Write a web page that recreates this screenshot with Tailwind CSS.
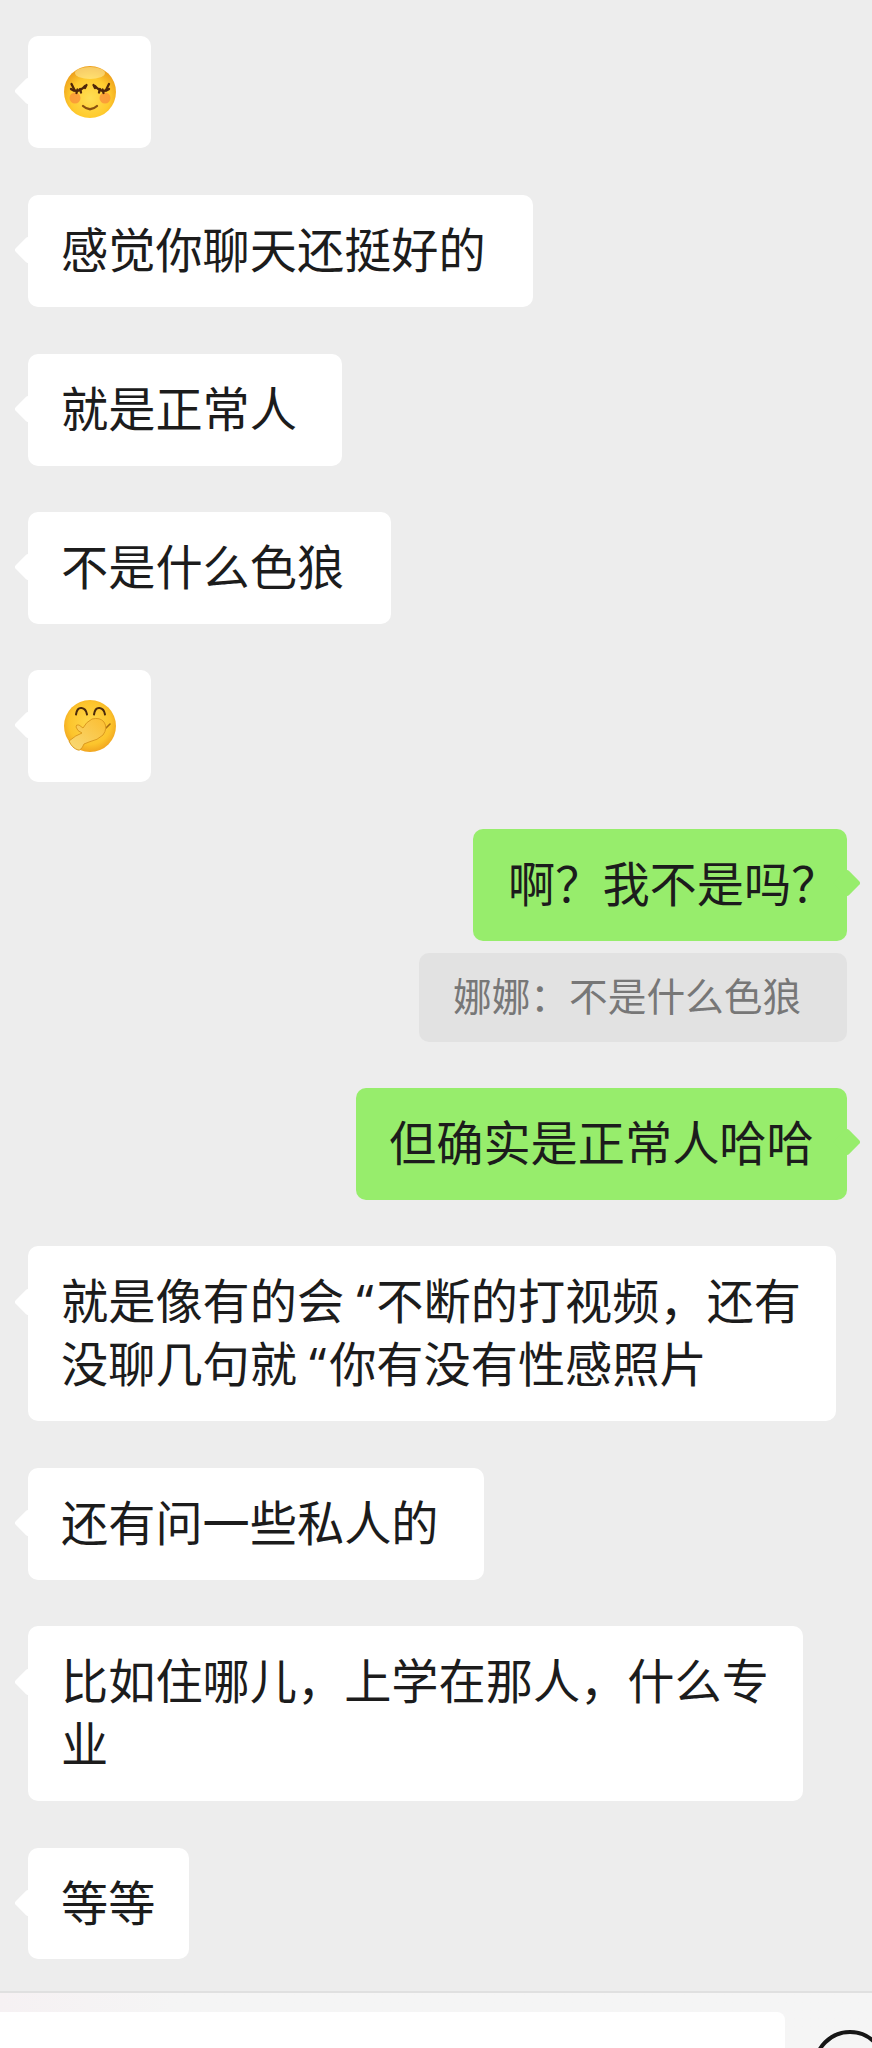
<!DOCTYPE html>
<html lang="zh">
<head>
<meta charset="utf-8">
<script src="https://cdn.jsdelivr.net/npm/@tailwindcss/browser@4"></script>
<title>Chat</title>
</head>
<body class="bg-[#ededed]">
<div class="h-[2048px] w-[872px] overflow-hidden flex flex-col text-[47.2px] leading-[63px] text-[#1c1c1c] font-['Noto_Sans','Noto_Sans_CJK_SC',sans-serif]">

  <!-- Messages -->
  <div class="flex flex-col items-start shrink-0 pt-[36px] pl-[28px] pr-[25px] h-[1991px]">
    <div class="relative shrink-0 bg-white rounded-[10px] w-[123px] h-[112px] flex items-center justify-center">
      <span class="absolute left-[-10px] top-[45px] w-[20px] h-[20px] rotate-45 rounded-[3px] bg-white"></span>
      <svg class="relative" width="56" height="56" viewBox="0 0 56 56">
        <defs>
          <radialGradient id="face1" cx="50%" cy="62%" r="58%">
            <stop offset="0" stop-color="#ffdf55"/>
            <stop offset="0.65" stop-color="#ffcb2e"/>
            <stop offset="1" stop-color="#eea11c"/>
          </radialGradient>
        </defs>
        <circle cx="28" cy="28" r="26" fill="url(#face1)"/>
        <ellipse cx="28" cy="9" rx="15" ry="6" fill="#fff1a6" opacity=".55"/>
        <circle cx="13" cy="34" r="5.500" fill="#f98a3a" opacity=".7"/>
        <circle cx="43" cy="34" r="5.500" fill="#f98a3a" opacity=".7"/>
        <g fill="none" stroke="#4f260a" stroke-width="2.300" stroke-linecap="round">
          <path d="M9 25q7 5 14-3"/><path d="M9.500 20l3 6M14.500 29l1-3.500M19 28.500l-1-3.500M23 24l1.500-3"/>
          <path d="M33 22q7 8 14 3"/><path d="M47 20l-3 6M41.500 29l-1-3.500M37 28.500l1-3.500M33 24l-1.500-3"/>
          <path d="M21 42q7 6.500 14 0" stroke="#8a5210"/>
        </g>
      </svg>
    </div>

    <div class="relative shrink-0 bg-white rounded-[10px] mt-[47px] w-[505px] h-[112px] pl-[33px] pt-[24px]">
      <span class="absolute left-[-10px] top-[45px] w-[20px] h-[20px] rotate-45 rounded-[3px] bg-white"></span>
      <p class="relative">感觉你聊天还挺好的</p>
    </div>

    <div class="relative shrink-0 bg-white rounded-[10px] mt-[47px] w-[314px] h-[112px] pl-[33px] pt-[24px]">
      <span class="absolute left-[-10px] top-[45px] w-[20px] h-[20px] rotate-45 rounded-[3px] bg-white"></span>
      <p class="relative">就是正常人</p>
    </div>

    <div class="relative shrink-0 bg-white rounded-[10px] mt-[46px] w-[363px] h-[112px] pl-[33px] pt-[24px]">
      <span class="absolute left-[-10px] top-[45px] w-[20px] h-[20px] rotate-45 rounded-[3px] bg-white"></span>
      <p class="relative">不是什么色狼</p>
    </div>

    <div class="relative shrink-0 bg-white rounded-[10px] mt-[46px] w-[123px] h-[112px] flex items-center justify-center">
      <span class="absolute left-[-10px] top-[45px] w-[20px] h-[20px] rotate-45 rounded-[3px] bg-white"></span>
      <svg class="relative" width="56" height="56" viewBox="0 0 56 56">
        <defs>
          <radialGradient id="face2" cx="50%" cy="45%" r="58%">
            <stop offset="0" stop-color="#ffd84a"/>
            <stop offset="0.7" stop-color="#fcc42c"/>
            <stop offset="1" stop-color="#ef9f1e"/>
          </radialGradient>
          <linearGradient id="hand" x1="1" y1="0" x2="0" y2="1">
            <stop offset="0" stop-color="#fbbd30"/>
            <stop offset="1" stop-color="#f9da78"/>
          </linearGradient>
        </defs>
        <circle cx="28" cy="28" r="26" fill="url(#face2)"/>
        <g fill="none" stroke="#4a2a0c" stroke-width="2" stroke-linecap="round">
          <path d="M14 16.500q1-7 5.500-6.500t5.500 6.500"/>
          <path d="M32 16.500q1-7 5.500-6.500t5.500 6.500"/>
          <path d="M44 30l4-4" stroke="#a56a12" stroke-width="1.600"/>
        </g>
        <path d="M7 43Q14 37 20 35Q15 33 14 29Q14 26 17 27L21 30Q24 24 30 21Q38 19 42 24Q46 30 41 37Q36 42 27 44L22 46Q19 53 16 52Q10 50 7 43Z" fill="url(#hand)" stroke="#dc9a1e" stroke-width="1" stroke-linejoin="round"/>
      </svg>
    </div>

    <div class="relative shrink-0 self-end bg-[#97ed6c] rounded-[10px] mt-[47px] w-[374px] h-[112px] pl-[35px] pt-[24px]">
      <span class="absolute right-[-10px] top-[44px] w-[20px] h-[20px] rotate-45 rounded-[3px] bg-[#97ed6c]"></span>
      <p class="relative">啊？我不是吗？</p>
    </div>
    <div class="shrink-0 self-end bg-[#e2e2e2] rounded-[10px] mt-[12px] w-[428px] h-[89px] pl-[34px] flex items-center text-[38.7px] text-[#777777]">
      <p class="-mt-[2px]">娜娜：不是什么色狼</p>
    </div>

    <div class="relative shrink-0 self-end bg-[#97ed6c] rounded-[10px] mt-[46px] w-[491px] h-[112px] pl-[33px] pt-[24px]">
      <span class="absolute right-[-10px] top-[44px] w-[20px] h-[20px] rotate-45 rounded-[3px] bg-[#97ed6c]"></span>
      <p class="relative">但确实是正常人哈哈</p>
    </div>

    <div class="relative shrink-0 bg-white rounded-[10px] mt-[46px] w-[808px] h-[175px] pl-[33px] pt-[24px]">
      <span class="absolute left-[-10px] top-[46px] w-[20px] h-[20px] rotate-45 rounded-[3px] bg-white"></span>
      <p class="relative whitespace-nowrap">就是像有的会 “<span class="ml-[3px]">不断的打视频，还有</span><br>没聊几句就 “<span class="ml-[3px]">你有没有性感照片</span></p>
    </div>

    <div class="relative shrink-0 bg-white rounded-[10px] mt-[47px] w-[456px] h-[112px] pl-[33px] pt-[24px]">
      <span class="absolute left-[-10px] top-[45px] w-[20px] h-[20px] rotate-45 rounded-[3px] bg-white"></span>
      <p class="relative">还有问一些私人的</p>
    </div>

    <div class="relative shrink-0 bg-white rounded-[10px] mt-[46px] w-[775px] h-[175px] pl-[33px] pt-[24px]">
      <span class="absolute left-[-10px] top-[46px] w-[20px] h-[20px] rotate-45 rounded-[3px] bg-white"></span>
      <p class="relative whitespace-nowrap">比如住哪儿，上学在那人，什么专<br>业</p>
    </div>

    <div class="relative shrink-0 bg-white rounded-[10px] mt-[47px] w-[161px] h-[111px] pl-[33px] pt-[24px]">
      <span class="absolute left-[-10px] top-[45px] w-[20px] h-[20px] rotate-45 rounded-[3px] bg-white"></span>
      <p class="relative">等等</p>
    </div>
  </div>

  <!-- Input bar -->
  <div class="flex-1 min-h-0 bg-linear-to-r from-[#f6f1f3] to-[#f5f5f5] to-[20%] border-t-2 border-[#e0e0e0] pt-[19px] flex items-start overflow-hidden">
    <div class="w-[785px] h-[60px] shrink-0 bg-white rounded-tr-[8px]"></div>
    <svg class="ml-[28px] mt-[18px] shrink-0" width="74" height="74" viewBox="0 0 74 74">
      <circle cx="37" cy="37" r="35" fill="none" stroke="#161616" stroke-width="4"/>
    </svg>
  </div>
</div>
</body>
</html>
